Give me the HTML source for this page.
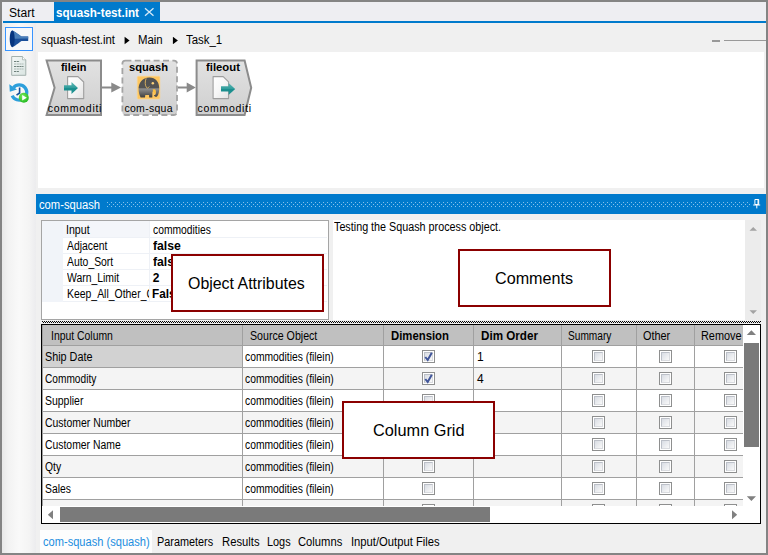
<!DOCTYPE html>
<html><head><meta charset="utf-8">
<style>
html,body{margin:0;padding:0;}
body{width:768px;height:555px;overflow:hidden;background:#f0f0f0;font-family:"Liberation Sans",sans-serif;font-size:11px;color:#000;position:relative;}
.a{position:absolute;}
.t{position:absolute;white-space:nowrap;line-height:1;transform-origin:0 50%;}
#frame{left:0;top:0;width:764px;height:551px;border:2px solid #848484;z-index:50;}
.cb{position:absolute;width:11px;height:11px;border:1px solid #8e8f8f;background:#fff;}
.cb i{position:absolute;left:1px;top:1px;width:9px;height:9px;box-sizing:border-box;border:1px solid;border-color:#bcc0c8 #d9dbdf #d9dbdf #bcc0c8;background:linear-gradient(135deg,#d9dde4,#f9f9f9);}
.hl{position:absolute;left:42px;width:701px;height:1px;background:#a0a0a0;}
.vl{position:absolute;top:325px;width:1px;height:181px;background:#a0a0a0;}
.co{position:absolute;background:#fff;border:2px solid #8b0000;z-index:10;box-sizing:border-box;}
</style></head><body>
<div class="a" id="frame"></div>

<!-- tab bar -->
<div class="a" style="left:2px;top:2px;width:764px;height:19px;background:#eeeef2"></div>
<div class="a" style="left:2px;top:23px;width:34px;height:530px;background:linear-gradient(90deg,#e8e8e8 0,#f2f2f2 18%,#f9f9f9 50%,#f4f4f4 80%,#ececee 100%)"></div>
<div class="a" style="left:3px;top:21px;width:763px;height:2px;background:#007acc"></div>
<div class="a" style="left:54px;top:2px;width:106px;height:20px;background:#007acc"></div>
<svg class="a" style="left:144px;top:7px" width="12" height="11"><path d="M1 1.3 L9.5 8.8 M9.5 1.3 L1 8.8" stroke="#d4e9f7" stroke-width="1.3" fill="none"/></svg>

<!-- sidebar -->
<div class="a" style="left:5px;top:27px;width:26px;height:22px;border:1px solid #3794ff;background:#f7f8fa"></div>
<svg class="a" style="left:5px;top:27px" width="28" height="24" viewBox="5 27 28 24">
 <path d="M12.2 30.4 C14.5 31 18.5 34.4 21.5 36.4 L28.2 36.5 L28.2 40.9 L21.5 41 C18.5 43 14.5 46.6 12.2 47.2Z" fill="#1a4f9a"/>
 <path d="M13.2 31 C15.5 32 19 34.8 21.5 36.5 L28.2 36.6 L28.2 38.6 L14.2 38.7Z" fill="#4a7fba"/>
 <ellipse cx="12.2" cy="38.8" rx="2.5" ry="8.4" fill="#06357f"/>
</svg>
<svg class="a" style="left:10px;top:55px" width="18" height="22" viewBox="10 55 18 22">
 <defs><linearGradient id="dg" x1="0" y1="0" x2="1" y2="1"><stop offset="0" stop-color="#f4f8f7"/><stop offset="1" stop-color="#d9e4e1"/></linearGradient></defs>
 <path d="M11.7 56.5 H22.5 L25.8 59.8 V75.3 H11.7Z" fill="url(#dg)" stroke="#a3b1ad" stroke-width="1"/>
 <path d="M22.5 56.5 V59.8 H25.8" fill="#fff" stroke="#a3b1ad" stroke-width="0.8"/>
 <g stroke="#6f807b" stroke-width="1" stroke-dasharray="2.2 0.5">
  <path d="M14 61.5 H19.5" /><path d="M14 64 H23.5" stroke="#a9b7b3"/><path d="M14 66.5 H23.5"/><path d="M14 69 H23.5" stroke="#a9b7b3"/><path d="M14 71.5 H19"/>
 </g>
</svg>
<svg class="a" style="left:8px;top:82px" width="24" height="22" viewBox="8 82 24 22">
 <defs><radialGradient id="gg" cx="0.4" cy="0.35" r="0.7"><stop offset="0" stop-color="#7bea5a"/><stop offset="1" stop-color="#1fb81f"/></radialGradient></defs>
 <path d="M13.5 87.5 A7.6 7.6 0 1 1 12.2 95.5" fill="none" stroke="#2d9fdb" stroke-width="3.2"/>
 <path d="M9.3 84.2 L9.8 91.8 L17 89.6Z" fill="#2d9fdb"/>
 <path d="M19.6 87.5 V93 L16.5 95.2" fill="none" stroke="#14509a" stroke-width="1.6"/>
 <circle cx="23.8" cy="97.7" r="5" fill="url(#gg)"/>
 <path d="M22.2 95 L26.8 97.7 L22.2 100.4Z" fill="#fff"/>
</svg>

<!-- breadcrumb arrows & slider -->
<svg class="a" style="left:120px;top:34px" width="70" height="14" viewBox="120 34 70 14"><path d="M124.6 36.8 L129.6 40.5 L124.6 44.2Z M172.9 36.8 L177.9 40.5 L172.9 44.2Z" fill="#000"/></svg>
<div class="a" style="left:712px;top:40px;width:8px;height:2px;background:#999"></div>
<div class="a" style="left:724px;top:40px;width:42px;height:1px;background:#999"></div>

<!-- canvas -->
<div class="a" style="left:38px;top:52px;width:726px;height:136px;background:#fff"></div>
<svg class="a" style="left:38px;top:51px" width="230" height="75" viewBox="38 51 230 75">
 <defs>
  <linearGradient id="ng" x1="0" y1="0" x2="0" y2="1"><stop offset="0" stop-color="#e2e2e2"/><stop offset="1" stop-color="#cfcfcf"/></linearGradient>
  <linearGradient id="pg" x1="0" y1="0" x2="1" y2="1"><stop offset="0" stop-color="#ffffff"/><stop offset="0.5" stop-color="#f6f6f6"/><stop offset="1" stop-color="#e2e2e2"/></linearGradient>
  <linearGradient id="ag" x1="0" y1="0" x2="0" y2="1"><stop offset="0" stop-color="#5fb8b5"/><stop offset="0.5" stop-color="#2f9c9b"/><stop offset="0.55" stop-color="#178c8c"/><stop offset="1" stop-color="#2a9796"/></linearGradient>
  <linearGradient id="eg" x1="0" y1="0" x2="0" y2="1"><stop offset="0" stop-color="#515151"/><stop offset="0.52" stop-color="#535353"/><stop offset="0.56" stop-color="#909090"/><stop offset="0.95" stop-color="#464646"/><stop offset="1" stop-color="#444"/></linearGradient>
 </defs>
 <!-- connectors -->
 <path d="M102 87.5 H112 M178 87.5 H188" stroke="#8a8a8a" stroke-width="2.2"/>
 <path d="M111.3 82.6 L121 87.5 L111.3 92.4Z M186.7 82.6 L195.8 87.5 L186.7 92.4Z" fill="#8a8a8a"/>
 <!-- filein -->
 <path d="M46.6 60.5 H101 V115 H46.6 L54.6 87.7Z" fill="url(#ng)" stroke="#8c8c8c" stroke-width="2"/>
 <path d="M67.6 76.6 H78 L83.7 82 V98.6 H67.6Z" fill="url(#pg)" stroke="#9e9e9e" stroke-width="1.1" stroke-linejoin="round"/>
 <path d="M64 85.3 H71.5 V82 L78 88 L71.5 94 V90.6 H64Z" fill="url(#ag)"/>
 <!-- squash -->
 <rect x="122.4" y="60.6" width="54.6" height="54.4" rx="3" fill="url(#ng)" stroke="#a4a4a4" stroke-width="1.8" stroke-dasharray="6 3.4"/>
 <rect x="137.3" y="76.2" width="22.6" height="22.8" rx="1" fill="#fdc65f" stroke="#fcd691" stroke-width="0.7"/>
 <g>
  <path d="M140.6 97.6 C139.4 95 138.6 92 138.6 89.3 C138.4 83 142.5 77.6 149.3 77.5 C155.5 77.4 159.2 82 159.2 88 C159.2 91 158.9 93 158.2 94.5 C157.6 96 156.8 96.9 156 96.8 C155 96.7 154.2 96.2 153.9 95.5 C154.6 95.4 155.2 95.2 155.5 94.3 C155.9 93 155.8 91 155.2 89.6 C154.6 90.7 153.4 91.5 152.4 91.7 L152.3 97.6 H149.2 L149 95 H145.3 L145 97.6Z" fill="url(#eg)"/>
  <path d="M152.6 89.4 C153.6 89.2 154.6 89.2 155.2 89.6 C155.8 91 155.9 93 155.5 94.1 C154.6 93.6 153 91.5 152.6 89.4Z" fill="#fcc040"/>
  <path d="M146.2 78.4 C144.7 81.5 145 85.5 146.6 87.6 C147.3 88.5 148.3 88 149.3 86.5" fill="none" stroke="#f3c361" stroke-width="0.8"/>
  <circle cx="152.8" cy="83.2" r="1.25" fill="#fdd27a"/>
 </g>
 <!-- fileout -->
 <path d="M196.6 60.6 H244.6 L251.2 87.8 L244.6 115 H196.6Z" fill="url(#ng)" stroke="#8c8c8c" stroke-width="2"/>
 <path d="M213.1 76.6 H223.2 L228.6 81.8 V98.6 H213.1Z" fill="url(#pg)" stroke="#9e9e9e" stroke-width="1.1" stroke-linejoin="round"/>
 <path d="M221 86.3 H228.6 V83 L235.2 89 L228.6 95 V91.6 H221Z" fill="url(#ag)"/>
</svg>

<!-- header -->
<div class="a" style="left:36px;top:194px;width:730px;height:20px;background:#007acc"></div>
<svg class="a" style="left:107px;top:202px" width="643" height="6">
 <defs><pattern id="gp" x="0" y="0" width="4" height="4" patternUnits="userSpaceOnUse"><rect x="0" y="0" width="1" height="1" fill="#86c1ec"/><rect x="2" y="2" width="1" height="1" fill="#86c1ec"/></pattern></defs>
 <rect x="0" y="0" width="646" height="5" fill="url(#gp)"/>
</svg>
<svg class="a" style="left:752px;top:198px" width="10" height="12" viewBox="752 198 10 12"><path d="M754.9 199.5 H758.7 V204.5 H754.9Z" fill="none" stroke="#fff" stroke-width="1"/><path d="M757.5 199.5 V204.5 H758.7 V199.5Z" fill="#fff"/><path d="M753.2 205 H760.2 M756.8 205 V208.4" stroke="#fff" stroke-width="1"/></svg>

<!-- attributes -->
<div class="a" style="left:41px;top:220px;width:286px;height:98px;background:#fff;border:1px solid #a5a5a5"></div>
<div class="a" style="left:42px;top:221px;width:21px;height:81px;background:#f1f4f9"></div>
<div class="a" style="left:63px;top:221px;width:86px;height:16px;background:#f4f6fa"></div>
<div class="a" style="left:63px;top:237px;width:264px;height:1px;background:#eef1f6"></div>
<div class="a" style="left:63px;top:253px;width:264px;height:1px;background:#eef1f6"></div>
<div class="a" style="left:63px;top:269px;width:264px;height:1px;background:#eef1f6"></div>
<div class="a" style="left:63px;top:285px;width:264px;height:1px;background:#eef1f6"></div>
<div class="a" style="left:63px;top:301px;width:264px;height:1px;background:#eef1f6"></div>
<div class="a" style="left:149px;top:221px;width:1px;height:81px;background:#eef1f6"></div>

<!-- comments -->
<div class="a" style="left:333px;top:220px;width:412px;height:100px;background:#fff"></div>
<div class="a" style="left:745px;top:220px;width:16px;height:100px;background:#ececec"></div>
<svg class="a" style="left:745px;top:220px" width="16" height="100"><path d="M4.5 10.8 L8.2 7 L12 10.8Z M4.5 90.2 L8.2 94 L12 90.2Z" fill="#a3a3a3"/></svg>

<!-- splitter -->
<svg class="a" style="left:42px;top:321px" width="719" height="2">
 <defs><pattern id="sp" x="0" y="0" width="2" height="2" patternUnits="userSpaceOnUse"><rect x="0" y="0" width="1" height="1" fill="#000"/><rect x="1" y="1" width="1" height="1" fill="#000"/></pattern></defs>
 <rect width="720" height="2" fill="url(#sp)"/>
</svg>

<!-- grid -->
<div class="a" style="left:41px;top:324px;width:718px;height:198px;background:#fff;border:1px solid #000;box-sizing:content-box"></div>
<div class="a" style="left:42px;top:325px;width:1px;height:181px;background:#a0a0a0;z-index:2"></div>
<div class="a" style="left:42px;top:325px;width:701px;height:20px;background:#c0c0c0"></div>
<div class="a" style="left:42px;top:346px;width:200px;height:21px;background:#d2d2d2"></div>
<div class="a" style="left:42px;top:368px;width:701px;height:21px;background:#f4f4f4"></div>
<div class="a" style="left:42px;top:412px;width:701px;height:21px;background:#f4f4f4"></div>
<div class="a" style="left:42px;top:456px;width:701px;height:21px;background:#f4f4f4"></div>
<div class="a" style="left:42px;top:500px;width:701px;height:6px;background:#f4f4f4"></div>
<div class="a" style="left:42px;top:346px;width:200px;height:21px;background:#d2d2d2"></div>
<div class="hl" style="top:345px"></div>
<div class="hl" style="top:367px"></div>
<div class="hl" style="top:389px"></div>
<div class="hl" style="top:411px"></div>
<div class="hl" style="top:433px"></div>
<div class="hl" style="top:455px"></div>
<div class="hl" style="top:477px"></div>
<div class="hl" style="top:499px"></div>
<div class="vl" style="left:242px"></div>
<div class="vl" style="left:383px"></div>
<div class="vl" style="left:473px"></div>
<div class="vl" style="left:561px"></div>
<div class="vl" style="left:636px"></div>
<div class="vl" style="left:694px"></div>
<div class="cb" style="left:422px;top:350px;"><i></i><svg style="position:absolute;left:0;top:0" width="11" height="11"><path d="M2.3 6 L4.7 9 L8.8 1.7" fill="none" stroke="#41569a" stroke-width="2"/></svg></div>
<div class="cb" style="left:592px;top:350px;"><i></i></div>
<div class="cb" style="left:659px;top:350px;"><i></i></div>
<div class="cb" style="left:724px;top:350px;"><i></i></div>
<div class="cb" style="left:422px;top:372px;"><i></i><svg style="position:absolute;left:0;top:0" width="11" height="11"><path d="M2.3 6 L4.7 9 L8.8 1.7" fill="none" stroke="#41569a" stroke-width="2"/></svg></div>
<div class="cb" style="left:592px;top:372px;"><i></i></div>
<div class="cb" style="left:659px;top:372px;"><i></i></div>
<div class="cb" style="left:724px;top:372px;"><i></i></div>
<div class="cb" style="left:422px;top:394px;"><i></i></div>
<div class="cb" style="left:592px;top:394px;"><i></i></div>
<div class="cb" style="left:659px;top:394px;"><i></i></div>
<div class="cb" style="left:724px;top:394px;"><i></i></div>
<div class="cb" style="left:422px;top:416px;"><i></i></div>
<div class="cb" style="left:592px;top:416px;"><i></i></div>
<div class="cb" style="left:659px;top:416px;"><i></i></div>
<div class="cb" style="left:724px;top:416px;"><i></i></div>
<div class="cb" style="left:422px;top:438px;"><i></i></div>
<div class="cb" style="left:592px;top:438px;"><i></i></div>
<div class="cb" style="left:659px;top:438px;"><i></i></div>
<div class="cb" style="left:724px;top:438px;"><i></i></div>
<div class="cb" style="left:422px;top:460px;"><i></i></div>
<div class="cb" style="left:592px;top:460px;"><i></i></div>
<div class="cb" style="left:659px;top:460px;"><i></i></div>
<div class="cb" style="left:724px;top:460px;"><i></i></div>
<div class="cb" style="left:422px;top:482px;"><i></i></div>
<div class="cb" style="left:592px;top:482px;"><i></i></div>
<div class="cb" style="left:659px;top:482px;"><i></i></div>
<div class="cb" style="left:724px;top:482px;"><i></i></div>
<div class="cb" style="left:422px;top:504px;height:1px;border-bottom:none;"><i></i></div>
<div class="cb" style="left:592px;top:504px;height:1px;border-bottom:none;"><i></i></div>
<div class="cb" style="left:659px;top:504px;height:1px;border-bottom:none;"><i></i></div>
<div class="cb" style="left:724px;top:504px;height:1px;border-bottom:none;"><i></i></div>
<!-- scrollbars -->
<div class="a" style="left:743px;top:325px;width:17px;height:181px;background:#fff"></div>
<div class="a" style="left:744px;top:343px;width:15px;height:104px;background:#7a7a7a"></div>
<svg class="a" style="left:743px;top:325px" width="17" height="181"><path d="M3.8 10 L8.4 5.2 L13 10Z M3.8 171.3 L8.4 176 L13 171.3Z" fill="#808080"/></svg>
<div class="a" style="left:42px;top:506px;width:718px;height:17px;background:#fff"></div>
<div class="a" style="left:60px;top:507px;width:430px;height:15px;background:#7a7a7a"></div>
<svg class="a" style="left:42px;top:506px" width="718" height="17"><path d="M11 4.2 L5.8 8.7 L11 13.2Z M690 4.2 L695.2 8.7 L690 13.2Z" fill="#808080"/></svg>

<!-- bottom tabs -->
<div class="a" style="left:40px;top:530px;width:112px;height:23px;background:#fdfdfd"></div>

<!-- callouts -->
<div class="co" style="left:171px;top:254px;width:153px;height:58px"></div>
<div class="co" style="left:458px;top:249px;width:153px;height:58px"></div>
<div class="co" style="left:342px;top:401px;width:153px;height:58px"></div>

<div class="t" style="left:8.99px;top:6.8px;font-size:12px;transform:scaleX(1.0083);">Start</div>
<div class="t" style="left:56.03px;top:6.8px;font-size:12px;font-weight:bold;color:#fff;transform:scaleX(0.9726);">squash-test.int</div>
<div class="t" style="left:41.05px;top:33.8px;font-size:12px;transform:scaleX(0.9481);">squash-test.int</div>
<div class="t" style="left:138.25px;top:33.8px;font-size:12px;transform:scaleX(0.9500);">Main</div>
<div class="t" style="left:186.30px;top:33.8px;font-size:12px;transform:scaleX(0.9526);">Task_1</div>
<div class="t" style="left:39.30px;top:199.1px;font-size:12px;color:#fff;transform:scaleX(0.9338);">com-squash</div>
<div class="t" style="left:61.40px;top:62.4px;font-size:11px;font-weight:bold;transform:scaleX(0.9880);">filein</div>
<div class="t" style="left:128.99px;top:62.4px;font-size:11px;font-weight:bold;transform:scaleX(1.0135);">squash</div>
<div class="t" style="left:206.30px;top:62.4px;font-size:11px;font-weight:bold;transform:scaleX(1.0273);">fileout</div>
<div class="t" style="left:47.70px;top:103.1px;font-size:10.5px;letter-spacing:0.74px;">commoditi</div>
<div class="t" style="left:124.40px;top:103.1px;font-size:10.5px;letter-spacing:0.30px;">com-squa</div>
<div class="t" style="left:197.60px;top:103.1px;font-size:10.5px;letter-spacing:0.71px;">commoditi</div>
<div class="t" style="left:66.02px;top:223.8px;font-size:12px;transform:scaleX(0.8846);">Input</div>
<div class="t" style="left:66.90px;top:239.8px;font-size:12px;transform:scaleX(0.8660);">Adjacent</div>
<div class="t" style="left:66.90px;top:255.8px;font-size:12px;transform:scaleX(0.8660);">Auto_Sort</div>
<div class="t" style="left:66.90px;top:271.8px;font-size:12px;transform:scaleX(0.8667);">Warn_Limit</div>
<div class="a" style="left:63px;top:286px;width:85.5px;height:16px;overflow:hidden"><div class="t" style="left:3.63px;top:1.8px;font-size:12px;transform:scaleX(0.8692);">Keep_All_Other_Columns</div></div>
<div class="t" style="left:152.50px;top:223.8px;font-size:12px;transform:scaleX(0.8582);">commodities</div>
<div class="t" style="left:152.50px;top:239.8px;font-size:12px;font-weight:bold;transform:scaleX(1.0185);">false</div>
<div class="t" style="left:152.50px;top:255.8px;font-size:12px;font-weight:bold;transform:scaleX(1.0185);">false</div>
<div class="t" style="left:152.80px;top:271.8px;font-size:12px;font-weight:bold;">2</div>
<div class="t" style="left:151.52px;top:287.8px;font-size:12px;font-weight:bold;transform:scaleX(0.9828);">False</div>
<div class="t" style="left:334.00px;top:220.8px;font-size:12px;transform:scaleX(0.8973);">Testing the Squash process object.</div>
<div class="t" style="left:50.63px;top:329.8px;font-size:12px;transform:scaleX(0.8671);">Input Column</div>
<div class="t" style="left:249.51px;top:329.8px;font-size:12px;transform:scaleX(0.8853);">Source Object</div>
<div class="t" style="left:390.75px;top:329.8px;font-size:12px;font-weight:bold;transform:scaleX(0.9450);">Dimension</div>
<div class="t" style="left:480.63px;top:329.8px;font-size:12px;font-weight:bold;transform:scaleX(0.9707);">Dim Order</div>
<div class="t" style="left:568.45px;top:329.8px;font-size:12px;transform:scaleX(0.8460);">Summary</div>
<div class="t" style="left:642.59px;top:329.8px;font-size:12px;transform:scaleX(0.9069);">Other</div>
<div class="t" style="left:701.29px;top:329.8px;font-size:12px;transform:scaleX(0.9070);">Remove</div>
<div class="t" style="left:45.10px;top:350.8px;font-size:12px;transform:scaleX(0.9000);">Ship Date</div>
<div class="t" style="left:245.10px;top:350.8px;font-size:12px;transform:scaleX(0.8592);">commodities (filein)</div>
<div class="t" style="left:44.66px;top:372.8px;font-size:12px;transform:scaleX(0.8450);">Commodity</div>
<div class="t" style="left:245.10px;top:372.8px;font-size:12px;transform:scaleX(0.8592);">commodities (filein)</div>
<div class="t" style="left:45.13px;top:394.8px;font-size:12px;transform:scaleX(0.8721);">Supplier</div>
<div class="t" style="left:245.10px;top:394.8px;font-size:12px;transform:scaleX(0.8592);">commodities (filein)</div>
<div class="t" style="left:44.63px;top:416.8px;font-size:12px;transform:scaleX(0.8711);">Customer Number</div>
<div class="t" style="left:245.10px;top:416.8px;font-size:12px;transform:scaleX(0.8592);">commodities (filein)</div>
<div class="t" style="left:44.63px;top:438.8px;font-size:12px;transform:scaleX(0.8663);">Customer Name</div>
<div class="t" style="left:245.10px;top:438.8px;font-size:12px;transform:scaleX(0.8592);">commodities (filein)</div>
<div class="t" style="left:44.64px;top:460.8px;font-size:12px;transform:scaleX(0.8611);">Qty</div>
<div class="t" style="left:245.10px;top:460.8px;font-size:12px;transform:scaleX(0.8592);">commodities (filein)</div>
<div class="t" style="left:45.14px;top:482.8px;font-size:12px;transform:scaleX(0.8621);">Sales</div>
<div class="t" style="left:245.10px;top:482.8px;font-size:12px;transform:scaleX(0.8592);">commodities (filein)</div>
<div class="t" style="left:477.00px;top:350.8px;font-size:12px;">1</div>
<div class="t" style="left:477.00px;top:372.8px;font-size:12px;">4</div>
<div class="t" style="left:42.90px;top:535.8px;font-size:12px;color:#1c8ee0;transform:scaleX(0.9243);">com-squash (squash)</div>
<div class="t" style="left:156.90px;top:535.8px;font-size:12px;transform:scaleX(0.9049);">Parameters</div>
<div class="t" style="left:221.56px;top:535.8px;font-size:12px;transform:scaleX(0.9385);">Results</div>
<div class="t" style="left:266.59px;top:535.8px;font-size:12px;transform:scaleX(0.9080);">Logs</div>
<div class="t" style="left:298.07px;top:535.8px;font-size:12px;transform:scaleX(0.9348);">Columns</div>
<div class="t" style="left:350.56px;top:535.8px;font-size:12px;transform:scaleX(0.9355);">Input/Output Files</div>
<div class="t" style="left:187.61px;top:275.5px;font-size:16px;z-index:11;transform:scaleX(0.9948);">Object Attributes</div>
<div class="t" style="left:494.69px;top:270.5px;font-size:16px;z-index:11;transform:scaleX(1.0092);">Comments</div>
<div class="t" style="left:373.28px;top:423.2px;font-size:16px;z-index:11;transform:scaleX(1.0193);">Column Grid</div>
</body></html>
